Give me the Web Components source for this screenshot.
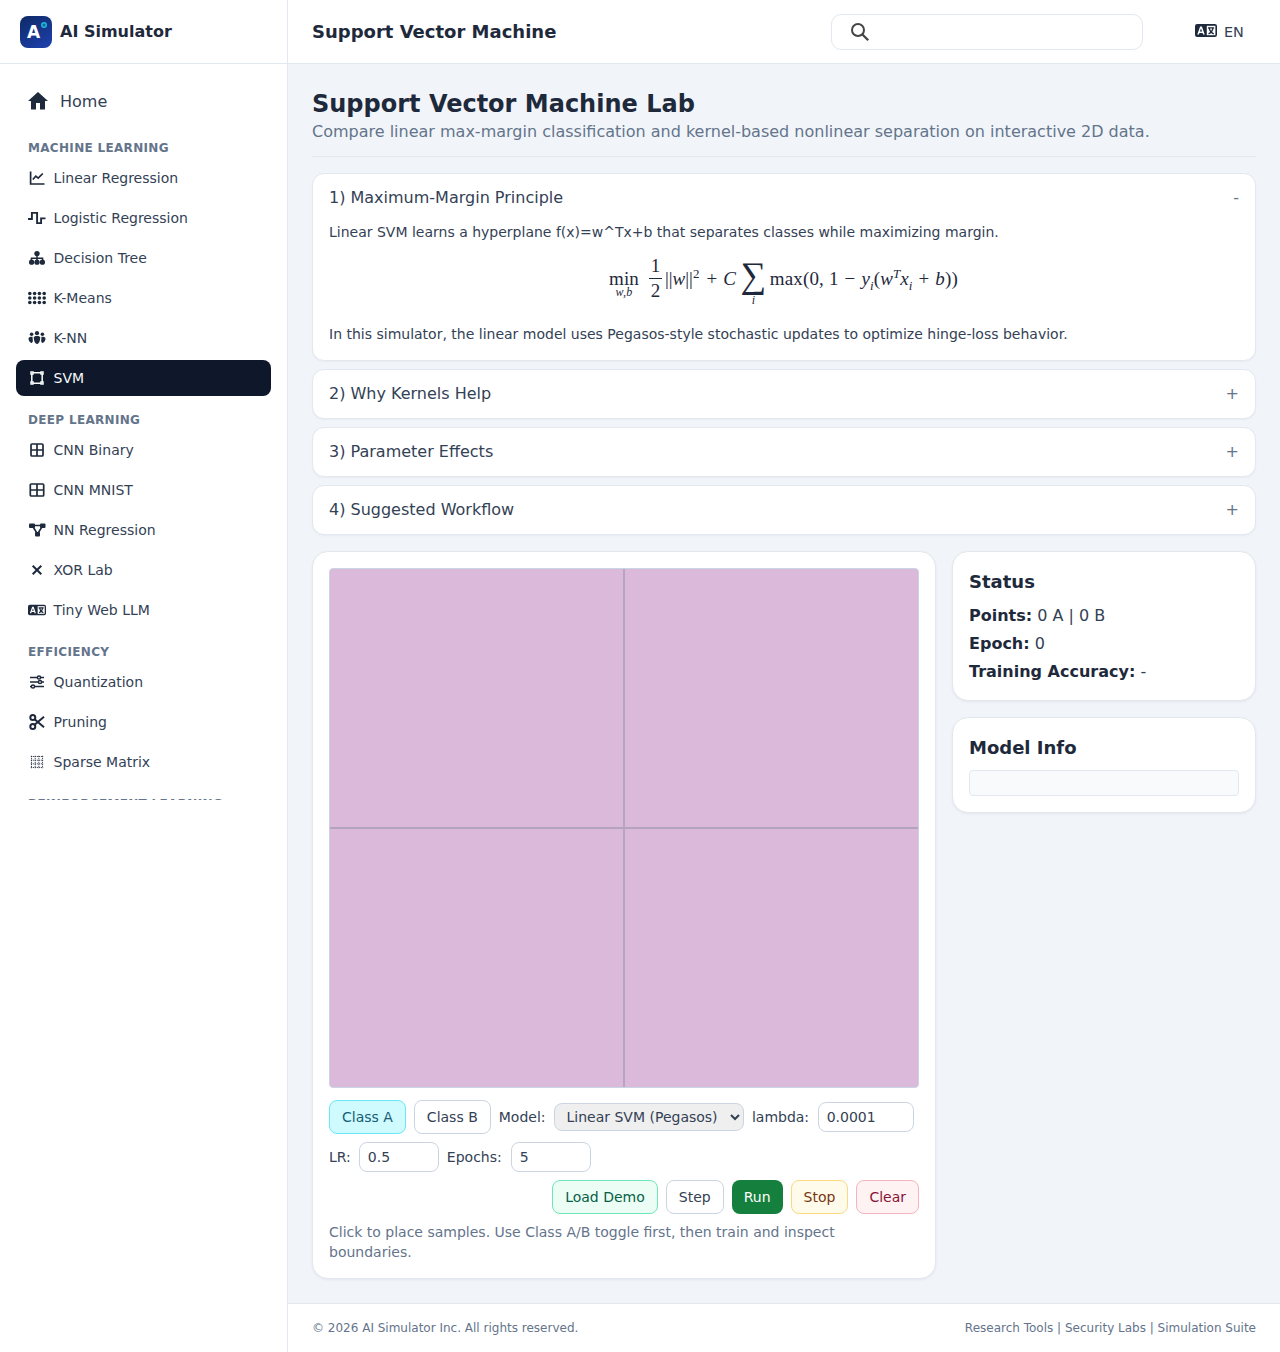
<!DOCTYPE html>
<html lang="en"><head><meta charset="utf-8"><title>Support Vector Machine</title>
<style>
html,body{margin:0;height:100%}
body{font-family:"DejaVu Sans",sans-serif;color:#1e293b;background:#f1f5f9}
</style></head><body>
<app-shell>
  <side-bar slot="side">
    <nav-item icon="home" big>Home</nav-item>
    <nav-head first>Machine Learning</nav-head>
    <nav-item icon="chart">Linear Regression</nav-item>
    <nav-item icon="step">Logistic Regression</nav-item>
    <nav-item icon="tree">Decision Tree</nav-item>
    <nav-item icon="dots">K-Means</nav-item>
    <nav-item icon="people">K-NN</nav-item>
    <nav-item icon="bbox" active>SVM</nav-item>
    <nav-head>Deep Learning</nav-head>
    <nav-item icon="grid">CNN Binary</nav-item>
    <nav-item icon="gridw">CNN MNIST</nav-item>
    <nav-item icon="net">NN Regression</nav-item>
    <nav-item icon="x">XOR Lab</nav-item>
    <nav-item icon="lang">Tiny Web LLM</nav-item>
    <nav-head>Efficiency</nav-head>
    <nav-item icon="sliders">Quantization</nav-item>
    <nav-item icon="scissors">Pruning</nav-item>
    <nav-item icon="sparse">Sparse Matrix</nav-item>
    <nav-head>Reinforcement Learning</nav-head>
  </side-bar>
  <top-bar slot="top">Support Vector Machine</top-bar>
  <page-head title="Support Vector Machine Lab">Compare linear max-margin classification and kernel-based nonlinear separation on interactive 2D data.</page-head>
  <acc-item open label="1) Maximum-Margin Principle">
    <p>Linear SVM learns a hyperplane f(x)=w^Tx+b that separates classes while maximizing margin.</p>
    <svm-formula></svm-formula>
    <p>In this simulator, the linear model uses Pegasos-style stochastic updates to optimize hinge-loss behavior.</p>
  </acc-item>
  <acc-item label="2) Why Kernels Help"></acc-item>
  <acc-item label="3) Parameter Effects"></acc-item>
  <acc-item label="4) Suggested Workflow"></acc-item>
  <lab-grid>
    <lab-card slot="left" wide>
      <svm-canvas></svm-canvas>
      <svm-controls></svm-controls>
    </lab-card>
    <lab-card slot="right" heading="Status">
      <stat-row label="Points:">0 A | 0 B</stat-row>
      <stat-row label="Epoch:">0</stat-row>
      <stat-row label="Training Accuracy:">-</stat-row>
    </lab-card>
    <lab-card slot="right" heading="Model Info"><info-box></info-box></lab-card>
  </lab-grid>
  <page-foot slot="foot"></page-foot>
</app-shell>
<script>
const LANG='<rect x="0" y="0" width="22" height="13" rx="2.2" fill="currentColor"/><path d="M2.300 10.600 5.100 2.600h1.800l2.800 8H8.100l-.5-1.600H4.400l-.5 1.600zM4.900 7.500h2.200L6 4.600z" fill="var(--lang-fg,#fff)"/><rect x="11.800" y="1.800" width="8.600" height="9.400" fill="var(--lang-fg,#fff)"/><path d="M13 3.900h6.200M14.200 3.900c.4 2.800 2.300 5 4.600 5.900M18 3.900c-.4 2.800-2.200 5-4.500 5.900" stroke="currentColor" stroke-width="1.300" fill="none"/>';
const ICONS={
 home:['2 2 20 20','<path d="M10 20.500v-6.500h4v6.500h5v-8.500h3L12 3 2 12h3v8.500z" fill="currentColor"/>'],
 chart:['0 0 18 18','<path d="M2.600 2.500v12.500H16.500M4.800 10.500l3-3.300 2.400 2 4.600-4.700" fill="none" stroke="currentColor" stroke-width="1.700"/>'],
 step:['0 0 18 18','<path d="M0 10h3.900V3.900h5.200v10.200h4V9.400H17.500" fill="none" stroke="currentColor" stroke-width="1.900"/>'],
 tree:['0 0 18 18','<circle cx="9" cy="4.600" r="2.700" fill="currentColor"/><path d="M9 5v4M3.400 13V9.200h11.200V13M9 9v4" fill="none" stroke="currentColor" stroke-width="1.400"/><circle cx="3.600" cy="13.200" r="2.600" fill="currentColor"/><circle cx="9" cy="13.200" r="2.600" fill="currentColor"/><circle cx="14.400" cy="13.200" r="2.600" fill="currentColor"/>'],
 dots:['0 0 18 18','<g fill="currentColor">'+[4.500,9,13.500].map(y=>[1.800,6.600,11.400,16.200].map(x=>`<circle cx="${x}" cy="${y}" r="1.800"/>`).join('')).join('')+'</g>'],
 people:['0 0 18 18','<g fill="currentColor"><circle cx="9" cy="4.200" r="2.100"/><circle cx="3.600" cy="5.200" r="1.800"/><circle cx="14.400" cy="5.200" r="1.800"/><path d="M5.800 8.600c0-1 1.100-1.600 3.200-1.600s3.200.6 3.200 1.600c0 2.700-1 6.400-3.200 6.400s-3.200-3.700-3.200-6.400z"/><path d="M.5 9.400c0-1 1.200-1.700 4-1.700l.4 4.500L3.900 14C1.800 13.500.5 11.600.5 9.400zM17.500 9.400c0-1-1.200-1.700-4-1.700l-.4 4.500 1 1.800c2.100-.5 3.400-2.400 3.400-4.600z"/></g>'],
 bbox:['0 0 18 18','<g fill="none" stroke="currentColor" stroke-width="1.500"><path d="M5 3.800h8M5 14.200h8M3.800 5v8M14.200 5v8"/><rect x="3" y="3" width="2" height="2"/><rect x="13" y="3" width="2" height="2"/><rect x="3" y="13" width="2" height="2"/><rect x="13" y="13" width="2" height="2"/></g>'],
 grid:['0 0 18 18','<path d="M4 3h10a1 1 0 0 1 1 1v10a1 1 0 0 1-1 1H4a1 1 0 0 1-1-1V4a1 1 0 0 1 1-1zM9 3v12M3 9h12" fill="none" stroke="currentColor" stroke-width="1.700"/>'],
 gridw:['0 0 18 18','<path d="M3.300 3h11.400a1 1 0 0 1 1 1v10a1 1 0 0 1-1 1H3.300a1 1 0 0 1-1-1V4a1 1 0 0 1 1-1zM9 3v12M2.300 9h13.400" fill="none" stroke="currentColor" stroke-width="1.700"/>'],
 net:['0 0 18 18','<g fill="currentColor"><rect x="1" y="2.500" width="6" height="4.400" rx="1"/><rect x="12" y="2.500" width="5.500" height="4.400" rx="1"/><rect x="7" y="11" width="5" height="4.500" rx="1"/></g><path d="M5 4.500h9M4.500 5l5 8M14.500 5l-5 8" stroke="currentColor" stroke-width="1.600" fill="none"/>'],
 x:['0 0 18 18','<path d="M4.700 4.700l8.600 8.600M13.300 4.700l-8.600 8.600" stroke="currentColor" stroke-width="2" fill="none"/>'],
 lang:['0 0 22 13',LANG],
 sliders:['0 0 18 18','<g fill="none" stroke="currentColor" stroke-width="1.500"><path d="M2 4.500h7.500M12.500 4.500H16M2 9h8.500M13.500 9H16M2 13.500h1.500M6.500 13.500H16"/><circle cx="11" cy="4.500" r="1.600"/><circle cx="12" cy="9" r="1.600"/><circle cx="5" cy="13.500" r="1.600"/></g>'],
 scissors:['0 0 18 18','<g fill="none" stroke="currentColor" stroke-width="2"><circle cx="4.800" cy="4.500" r="2.500"/><circle cx="4.800" cy="13.500" r="2.500"/><path d="M6.600 6.200 16 14.200M6.600 11.800 16 3.800"/></g>'],
 sparse:['0 0 18 18','<path d="M3.500 2.800v12.400M7.200 2.800v12.400M10.800 2.800v12.400M14.500 2.800v12.400M2.800 3.500h12.400M2.800 7.200h12.400M2.800 10.800h12.400M2.800 14.500h12.400" fill="none" stroke="currentColor" stroke-width="1" stroke-dasharray="1 1"/>']
};
function icon(n){const[v,b]=ICONS[n];return `<svg viewBox="${v}" aria-hidden="true">${b}</svg>`}
function el(name,html,extra){
  customElements.define(name,class extends HTMLElement{
    connectedCallback(){
      if(this.shadowRoot)return;
      const r=this.attachShadow({mode:'open'});
      r.innerHTML=typeof html==='function'?html(this):html;
      extra&&extra(this,r);
    }
  });
}
el('app-shell',`<style>
:host{display:grid;grid-template-columns:288px 1fr;grid-template-rows:64px 1fr;height:1352px;width:1280px;overflow:hidden}
.s{grid-row:1/3;min-height:0}.t{grid-column:2}
.m{grid-column:2;display:flex;flex-direction:column;min-height:0}
.c{flex:1;padding:24px 24px 0;display:flex;flex-direction:column;gap:8px}
</style><div class="s"><slot name="side"></slot></div><div class="t"><slot name="top"></slot></div>
<div class="m"><div class="c"><slot></slot></div><slot name="foot"></slot></div>`);
el('side-bar',`<style>
:host{display:flex;flex-direction:column;height:100%;background:#fff;border-right:1px solid #e2e8f0;box-sizing:border-box}
.b{height:64px;box-sizing:border-box;border-bottom:1px solid #e2e8f0;display:flex;align-items:center;gap:8px;padding-left:20px;font:700 16px "DejaVu Sans",sans-serif;color:#1e293b;flex:none}
.l{position:relative;width:32px;height:32px;border-radius:8px;background:linear-gradient(150deg,#0f2a66,#1e40af);display:flex;align-items:center;justify-content:center;color:#fff;font:700 17px "DejaVu Sans",sans-serif;box-sizing:border-box;padding:1px 5px 0 0}
.l svg{position:absolute;left:0;top:0;width:32px;height:32px}
.n{height:736px;overflow:hidden;padding:19px 16px 0;box-sizing:border-box;display:flex;flex-direction:column}
</style><div class="b"><span class="l">A<svg viewBox="0 0 32 32"><circle cx="24" cy="9" r="2.300" fill="#0b6f9a" stroke="#22b8e0" stroke-width="1.400"/></svg></span><span>AI Simulator</span></div><div class="n"><slot></slot></div>`);
el('nav-head',h=>`<style>
:host{display:block;flex:none;margin:${h.hasAttribute('first')?'17':'12'}px 12px 4px;font:700 12px/16px "DejaVu Sans",sans-serif;letter-spacing:.32px;text-transform:uppercase;color:#64748b;white-space:nowrap}
</style><slot></slot>`);
el('nav-item',h=>{const big=h.hasAttribute('big'),a=h.hasAttribute('active');return `<style>
:host{display:flex;flex:none;align-items:center;height:36px;margin-bottom:4px;padding-left:12px;border-radius:8px;font:${big?16:14}px "DejaVu Sans",sans-serif;color:${a?'#f8fafc':'#334155'};background:${a?'#0f172a':'transparent'};gap:${big?12:7.6}px;--lang-fg:#fff}
svg{width:${big?20:18}px;height:${big?20:18}px;flex:none;color:${a?'#f8fafc':'#1e293b'}}
</style>${icon(h.getAttribute('icon'))}<span><slot></slot></span>`});
el('top-bar',`<style>
:host{display:flex;align-items:center;height:64px;box-sizing:border-box;background:#fff;border-bottom:1px solid #e2e8f0;padding-left:24px}
h2{margin:0;font:700 18px "DejaVu Sans",sans-serif;color:#1e293b;flex:none;width:519px}
.q{width:312px;height:36px;box-sizing:border-box;border:1px solid #e2e8f0;border-radius:10px;display:flex;align-items:center;padding-left:18px;flex:none}
.q svg{width:20px;height:20px;color:#444}
.e{margin-left:52px;display:flex;align-items:center;gap:7px;font:14.400px "DejaVu Sans",sans-serif;color:#334155}
.e svg{width:22px;height:13px;margin-top:-2px;color:#1e293b;--lang-fg:#fff}
</style><h2><slot></slot></h2><div class="q"><svg viewBox="0 0 20 20"><circle cx="8" cy="8" r="6" fill="none" stroke="currentColor" stroke-width="2"/><path d="M12.200 12.200l6 6" stroke="currentColor" stroke-width="2.300"/></svg></div>
<div class="e"><svg viewBox="0 0 22 13">${LANG}</svg><span>EN</span></div>`);
el('page-head',h=>`<style>
:host{display:block;padding-bottom:12px;border-bottom:1px solid #e2e8f0;margin-bottom:8px}
h1{margin:0;font:700 24px/32px "DejaVu Sans",sans-serif;color:#1e293b}
p{margin:0;font:16px/24px "DejaVu Sans",sans-serif;color:#64748b}
</style><h1>${h.getAttribute('title')}</h1><p><slot></slot></p>`);
el('acc-item',h=>{const o=h.hasAttribute('open');return `<style>
:host{display:block;background:#fff;border:1px solid #e2e8f0;border-radius:12px;box-shadow:0 1px 2px rgba(15,23,42,.04)}
.h{display:flex;justify-content:space-between;align-items:center;height:48px;box-sizing:border-box;padding:0 16px 2px;font:16px "DejaVu Sans",sans-serif;color:#334155}
.m{color:#64748b;font:16px "DejaVu Sans",sans-serif}
.b{padding:0 16px 16px}
::slotted(p){margin:0;font:14px/20px "DejaVu Sans",sans-serif;color:#334155}
</style><div class="h"><span>${h.getAttribute('label')}</span><span class="m">${o?'-':'+'}</span></div>${o?'<div class="b"><slot></slot></div>':''}`});
el('svm-formula',`<style>
:host{display:flex;align-items:flex-start;height:82px;padding-left:280px;font:19px/20px "Liberation Serif",serif;color:#1e293b;white-space:nowrap;box-sizing:border-box}
i{font-style:italic}
.col{display:flex;flex-direction:column;align-items:center;flex:none}
.min{width:30px;margin-top:29px;letter-spacing:.1px}
.min span{line-height:16px}
.min small{font:italic 12px/11px "Liberation Serif",serif;letter-spacing:.3px}
.fr{width:13px;margin:14px 3px 0 10px}
.fr hr{width:13px;height:1px;background:#1e293b;border:0;margin:2px 0 2px}
.fr span{line-height:20px}
.t{margin-top:27px}
sup,sub{font-size:13px;line-height:0;letter-spacing:0}
.sum{width:25px;margin:13px 4px 0 5px}
.sum b{font:400 36px/40px "Liberation Serif",serif}
.sum small{font:italic 12px/12px "Liberation Serif",serif;margin-top:-1px}
.op{margin:0 6px}
</style>
<div class="col min"><span>min</span><small>w,b</small></div>
<div class="col fr"><span>1</span><hr><span>2</span></div>
<div class="t">||<i>w</i>||<sup>2</sup><span class="op" style="margin:0 6px 0 7px">+</span><i>C</i></div>
<div class="col sum"><b>∑</b><small>i</small></div>
<div class="t" style="letter-spacing:.15px">max(0, 1<span class="op">−</span><i>y</i><sub><i>i</i></sub>(<i>w</i><sup><i>T</i></sup><i>x</i><sub><i>i</i></sub><span class="op">+</span><i>b</i>))</div>`);
el('lab-grid',`<style>
:host{display:grid;grid-template-columns:624px 304px;gap:16px;margin-top:8px;align-items:start}
.r{display:flex;flex-direction:column;gap:16px}
</style><slot name="left"></slot><div class="r"><slot name="right"></slot></div>`);
el('lab-card',h=>`<style>
:host{display:block;background:#fff;border:1px solid #e2e8f0;border-radius:16px;padding:16px;box-shadow:0 1px 3px rgba(15,23,42,.06);box-sizing:border-box}
h3{margin:0 0 8px;font:700 18px/28px "DejaVu Sans",sans-serif;color:#1e293b}
</style>${h.hasAttribute('heading')?`<h3>${h.getAttribute('heading')}</h3>`:''}<slot></slot>`);
el('stat-row',h=>`<style>
:host{display:block;font:16px/24px "DejaVu Sans",sans-serif;color:#334155;margin-bottom:4px}
:host(:last-child){margin-bottom:0}
b{color:#1e293b}
</style><b>${h.getAttribute('label')}</b> <slot></slot>`);
el('info-box',`<style>:host{display:block;height:26px;box-sizing:border-box;background:#f8fafc;border:1px solid #e2e8f0;border-radius:4px}</style>`);
el('svm-canvas',`<style>
:host{display:block;height:520px;box-sizing:border-box;border:1px solid #cbd5e1;border-radius:4px;overflow:hidden;background:#dbb9da}
svg{display:block;width:100%;height:100%}
</style><svg viewBox="0 0 588 518" preserveAspectRatio="none"><path d="M294 0v518M0 259h588" stroke="#b3a3bf" stroke-width="1.800" fill="none"/></svg>`);
el('x-btn',h=>{const[bg,bd,fg]=(h.getAttribute('c')||'#fff,#cbd5e1,#334155').split(',');return `<style>
:host{display:inline-flex;align-items:center;height:34px;box-sizing:border-box;padding:0 12px;border:${bd==='none'?'0':'1px solid '+bd};border-radius:8px;background:${bg};color:${fg};font:14px "DejaVu Sans",sans-serif;flex:none}
</style><slot></slot>`});
el('svm-controls',`<style>
:host{display:block;margin-top:12px;font:14px "DejaVu Sans",sans-serif;color:#334155}
.w{display:flex;flex-wrap:wrap;align-items:center;gap:8px}
select{height:28px;width:190.400px;box-sizing:border-box;border:1px solid #cbd5e1;border-radius:8px;background-color:#efefef;font:14px "DejaVu Sans",sans-serif;color:#334155;padding:0 8px}
input{height:30px;box-sizing:border-box;border:1px solid #cbd5e1;border-radius:8px;font:14px "DejaVu Sans",sans-serif;color:#334155;padding:0 8px;background:#fff;outline:0}
.a{width:96px;margin-left:.6px}.b{width:80px}.d{margin-left:1px}
.e{justify-content:flex-end;margin-top:8px}
p{margin:8px 0 0;max-width:560px;font:14px/20px "DejaVu Sans",sans-serif;color:#64748b}
</style>
<div class="w"><x-btn c="#cffafe,#67e8f9,#155e75">Class A</x-btn><x-btn>Class B</x-btn><span>Model:</span>
<select><option>Linear SVM (Pegasos)</option><option>Kernel SVM (RBF)</option></select><span>lambda:</span><input class="a" value="0.0001">
<span>LR:</span><input class="b" value="0.5"><span>Epochs:</span><input class="b d" value="5"></div>
<div class="w e"><x-btn c="#ecfdf5,#6ee7b7,#065f46">Load Demo</x-btn><x-btn>Step</x-btn><x-btn c="#15803d,none,#ffffff">Run</x-btn><x-btn c="#fffbeb,#fcd980,#78350f">Stop</x-btn><x-btn c="#fef2f2,#f5b5be,#881337">Clear</x-btn></div>
<p>Click to place samples. Use Class A/B toggle first, then train and inspect boundaries.</p>`);
el('page-foot',`<style>
:host{display:flex;justify-content:space-between;align-items:center;height:49px;box-sizing:border-box;border-top:1px solid #e2e8f0;background:#fff;padding:0 24px;font:12px "DejaVu Sans",sans-serif;color:#64748b;flex:none}
</style><span>© 2026 AI Simulator Inc. All rights reserved.</span><span>Research Tools | Security Labs | Simulation Suite</span>`);
</script>
</body></html>
